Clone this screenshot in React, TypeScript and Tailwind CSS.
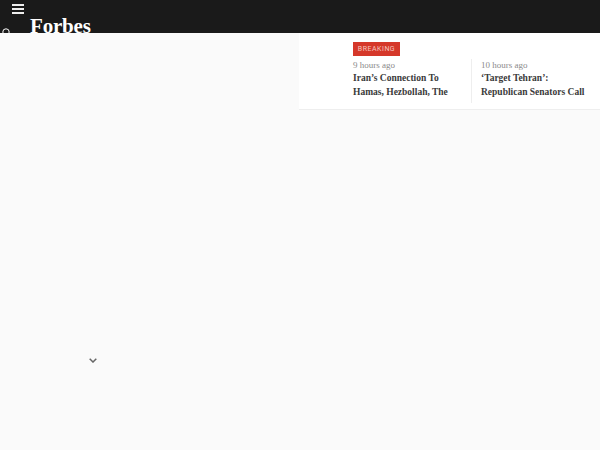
const serif = "font-['Liberation_Serif',serif]";

function Story({ time, lines }: { time: string; lines: string[] }) {
  return (
    <div>
      <div className={`${serif} text-[9px] leading-[12px] text-[#8a8a8a]`}>{time}</div>
      {lines.map((line) => (
        <div key={line} className={`${serif} text-[9.5px] font-bold leading-[14px] text-[#3a3a3a] whitespace-nowrap`}>
          {line}
        </div>
      ))}
    </div>
  );
}

export default function App() {
  return (
    <div className="h-[450px] w-[600px] overflow-hidden bg-[#fafafa]">
      <header className="flex h-[33px] overflow-hidden bg-[#1a1a1a]">
        <div className="w-[30px] shrink-0">
          <div className="ml-3 mt-1 flex h-[10px] w-3 flex-col justify-between">
            <span className="h-[2px] bg-[#eeeeee]" />
            <span className="h-[2px] bg-[#eeeeee]" />
            <span className="h-[2px] bg-[#eeeeee]" />
          </div>
          <svg className="ml-[2px] mt-[14px]" width="9" height="9" viewBox="0 0 9 9" fill="none" stroke="#ffffff" strokeWidth="1">
            <circle cx="4" cy="4" r="3.2" />
          </svg>
        </div>
        <div className="mt-[14px] font-['Liberation_Serif',serif] text-[21px] font-bold leading-[24px] tracking-[-0.2px] text-white">
          Forbes
        </div>
      </header>

      <div className="flex">
        <div className="w-[299px] shrink-0">
          <svg className="ml-[89px] mt-[325px]" width="8" height="5" viewBox="0 0 8 5" fill="none" stroke="#666666" strokeWidth="1.5">
            <path d="M0.7 0.7 4 4 7.3 0.7" />
          </svg>
        </div>
        <section className="h-[77px] flex-1 border-b border-[#eeeeee] bg-white pl-[54px] pt-[9px]">
          <div className="flex h-[14px] w-[47px] items-center justify-center bg-[#d5382a] font-['Roboto',sans-serif] text-[7px] tracking-[0.5px] text-[#f5c5be]">
            BREAKING
          </div>
          <div className="mt-[3px] flex h-[44px]">
            <div className="w-[119px] shrink-0 border-r border-[#eeeeee]">
              <Story time="9 hours ago" lines={["Iran’s Connection To", "Hamas, Hezbollah, The"]} />
            </div>
            <div className="pl-[9px]">
              <Story time="10 hours ago" lines={["‘Target Tehran’:", "Republican Senators Call"]} />
            </div>
          </div>
        </section>
      </div>
    </div>
  );
}
